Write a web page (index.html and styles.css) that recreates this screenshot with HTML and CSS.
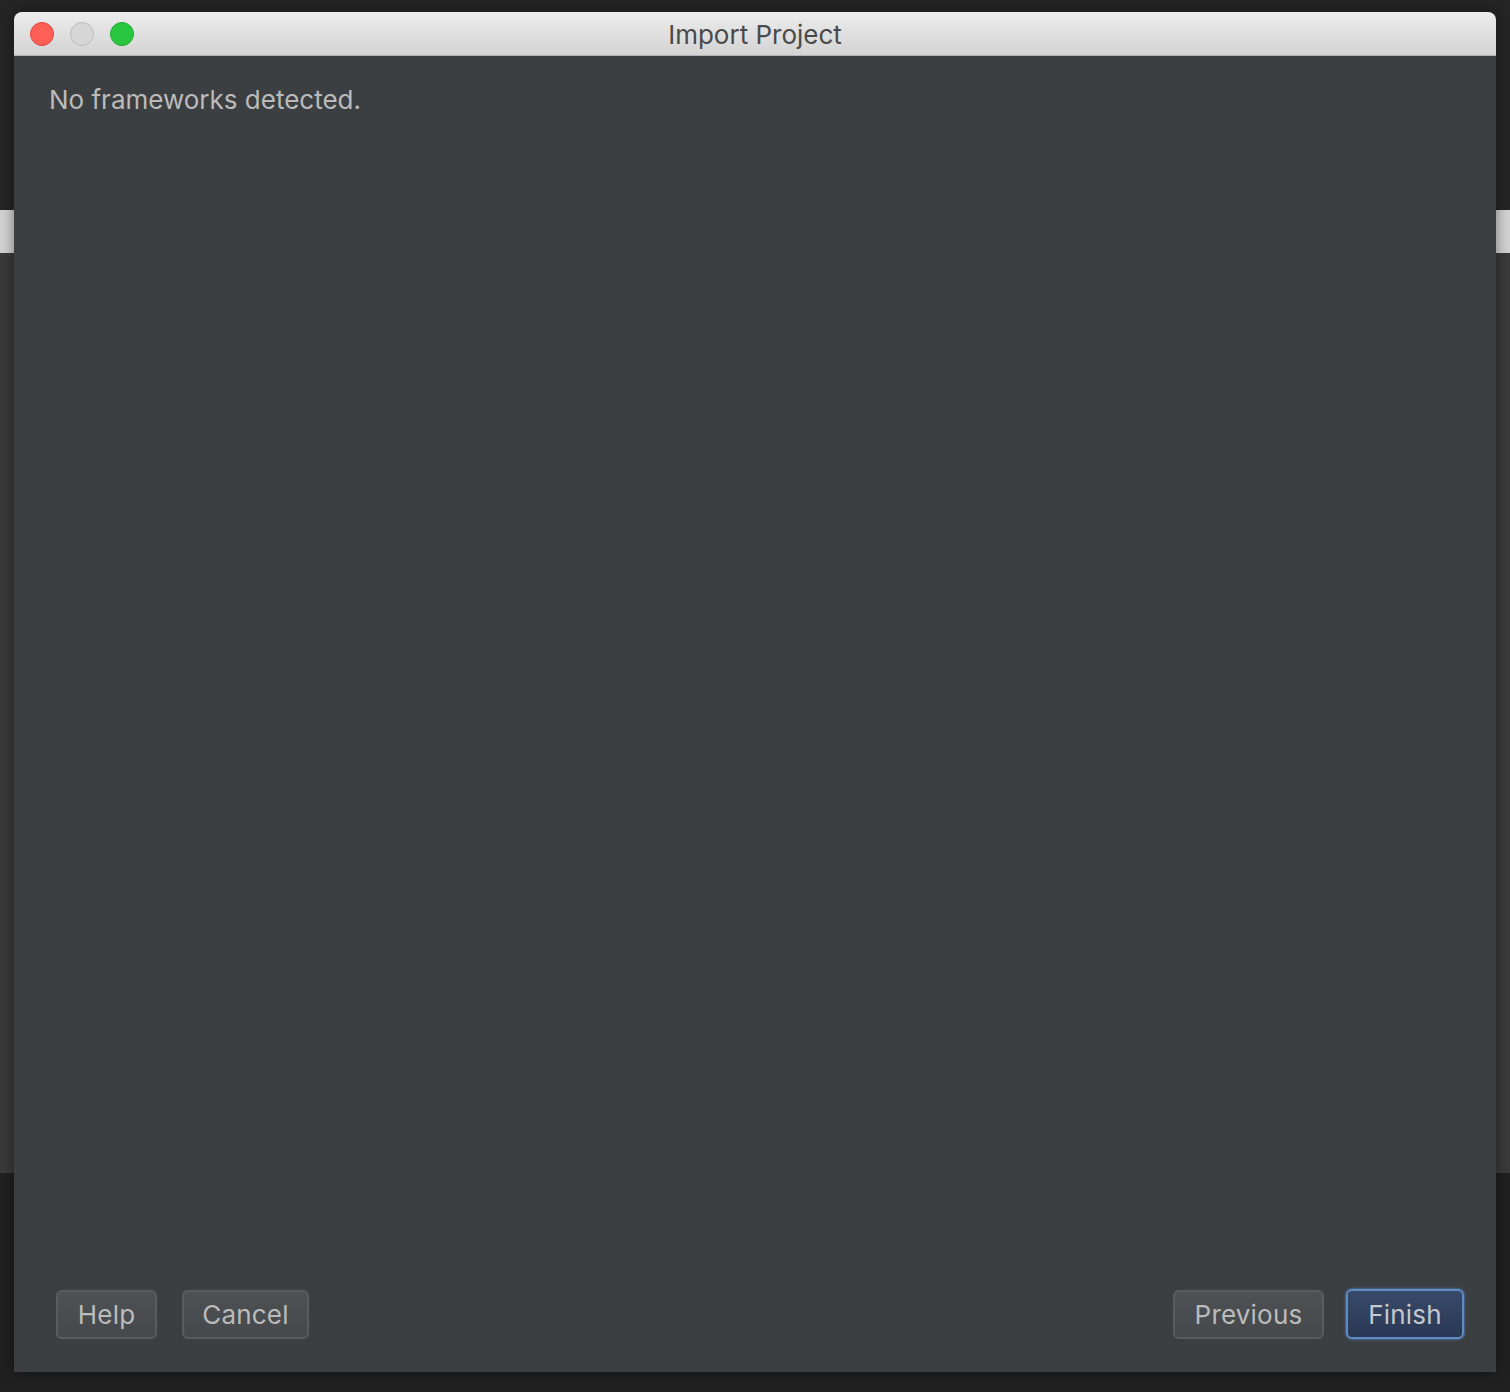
FILE: index.html
```html
<!DOCTYPE html>
<html lang="en">
<head>
  <meta charset="UTF-8">
  <title>Import Project</title>
  <link rel="stylesheet" href="styles.css">
</head>
<body>

  <div class="window">
    <div class="titlebar">
      <div class="lights">
        <span class="light red"></span>
        <span class="light gray"></span>
        <span class="light green"></span>
      </div>
      <div class="title">Import Project</div>
    </div>

    <div class="content">
      <p class="message">No frameworks detected.</p>

      <div class="actions">
        <div class="group">
          <button class="btn btn-help">Help</button>
          <button class="btn btn-cancel">Cancel</button>
        </div>
        <div class="group group-right">
          <button class="btn btn-prev">Previous</button>
          <button class="btn btn-default">Finish</button>
        </div>
      </div>
    </div>
  </div>

</body>
</html>
```

FILE: styles.css
```css
html, body {
  margin: 0;
  height: 100%;
}

body {
  font-family: Inter, "Liberation Sans", sans-serif;
  background: linear-gradient(to bottom,
    #252525 0, #252525 210px,
    #d2d2d2 210px, #d2d2d2 253px,
    #3a3a3a 253px, #3a3a3a 1173px,
    #202020 1173px);
  padding: 12px 0 0 14px;
  box-sizing: border-box;
  overflow: hidden;
}

.window {
  width: 1482px;
  height: 1360px;
  display: flex;
  flex-direction: column;
  background: #3c3f41;
  border-radius: 8px 8px 0 0;
  box-shadow: 0 0 14px rgba(0, 0, 0, 0.45);
}

.titlebar {
  height: 43px;
  position: relative;
  display: flex;
  align-items: center;
  justify-content: center;
  background: linear-gradient(#ececec, #d4d4d4);
  border-bottom: 1px solid #b2b2b2;
  border-radius: 8px 8px 0 0;
}

.lights {
  position: absolute;
  left: 16px;
  top: 10px;
  display: flex;
  gap: 16px;
}

.light {
  width: 22px;
  height: 22px;
  border-radius: 50%;
  border: 1px solid;
}

.red   { background: #fe5f57; border-color: #e0443e; }
.gray  { background: #d6d6d6; border-color: #bcbcbc; }
.green { background: #29c740; border-color: #1fab2f; }

.title {
  font-size: 26px;
  color: #4a4a4a;
  padding-top: 1px;
}

.content {
  flex: 1;
  display: flex;
  flex-direction: column;
  justify-content: space-between;
  padding: 28px 31px 33px 35px;
}

.message {
  margin: 0;
  font-size: 26px;
  color: #bbbbbb;
}

.actions {
  display: flex;
  justify-content: space-between;
  align-items: flex-end;
  padding-left: 7px;
}

.group {
  display: flex;
  align-items: flex-end;
  gap: 25px;
}

.group-right {
  gap: 22px;
}

.btn {
  height: 49px;
  font-family: inherit;
  font-size: 26px;
  letter-spacing: 0.2px;
  color: #bbbbbb;
  background: linear-gradient(#4d5153, #45494b);
  border: 2px solid #5a5d5f;
  border-radius: 6px;
  padding: 0;
}

.btn-help   { width: 101px; }
.btn-cancel { width: 127px; }
.btn-prev   { width: 151px; }

.btn-default {
  width: 118px;
  height: 50px;
  color: #c4c8ce;
  background: linear-gradient(#38496a, #2a3853);
  border: 2px solid #5f8cc4;
  box-shadow: 0 0 2px 1px rgba(80, 130, 200, 0.6);
  margin-right: 1px;
}
```
